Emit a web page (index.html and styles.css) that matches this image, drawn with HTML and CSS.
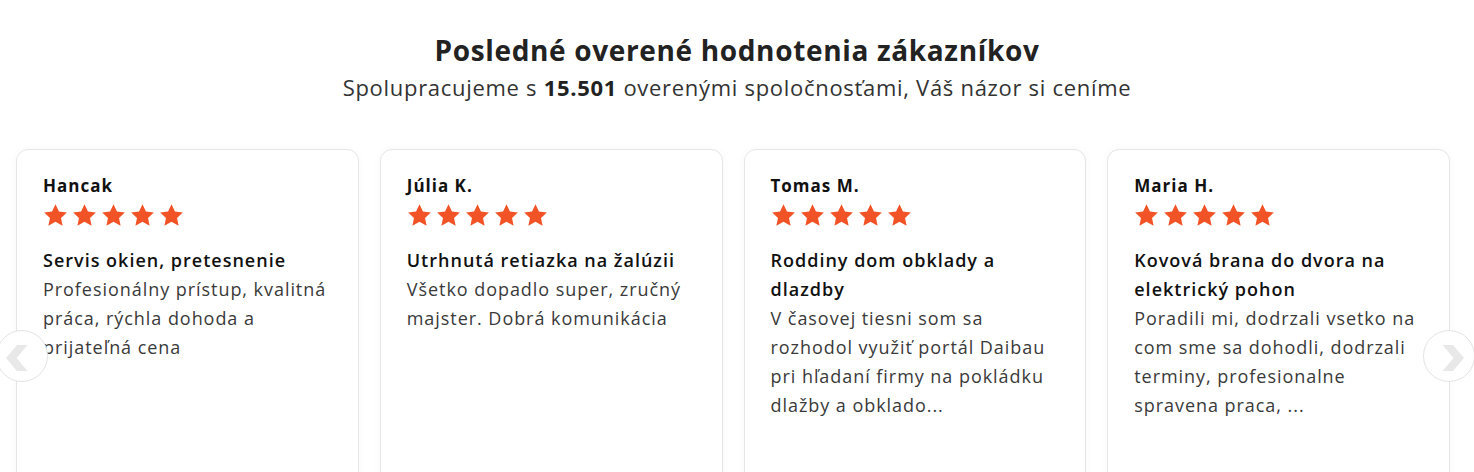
FILE: index.html
```html
<!DOCTYPE html>
<html lang="sk">
<head>
<meta charset="utf-8">
<title>Hodnotenia</title>
<link rel="stylesheet" href="styles.css">
</head>
<body>
<section class="reviews">
  <header class="reviews-head">
    <h2 class="reviews-title">Posledné overené hodnotenia zákazníkov</h2>
    <p class="reviews-sub">Spolupracujeme s <strong>15.501</strong> overenými spoločnosťami, Váš názor si ceníme</p>
  </header>
  <div class="carousel">
    <div class="track">
      <article class="card">
        <div class="name">Hancak</div>
        <div class="stars">
          <svg viewBox="0 0 24 24"><path d="M12 1.2l3.3 7 7.6.9-5.6 5.2 1.5 7.5L12 18l-6.8 3.8 1.5-7.5L1.1 9.1l7.6-.9z"/></svg>
          <svg viewBox="0 0 24 24"><path d="M12 1.2l3.3 7 7.6.9-5.6 5.2 1.5 7.5L12 18l-6.8 3.8 1.5-7.5L1.1 9.1l7.6-.9z"/></svg>
          <svg viewBox="0 0 24 24"><path d="M12 1.2l3.3 7 7.6.9-5.6 5.2 1.5 7.5L12 18l-6.8 3.8 1.5-7.5L1.1 9.1l7.6-.9z"/></svg>
          <svg viewBox="0 0 24 24"><path d="M12 1.2l3.3 7 7.6.9-5.6 5.2 1.5 7.5L12 18l-6.8 3.8 1.5-7.5L1.1 9.1l7.6-.9z"/></svg>
          <svg viewBox="0 0 24 24"><path d="M12 1.2l3.3 7 7.6.9-5.6 5.2 1.5 7.5L12 18l-6.8 3.8 1.5-7.5L1.1 9.1l7.6-.9z"/></svg>
        </div>
        <h3 class="job">Servis okien, pretesnenie</h3>
        <p class="text">Profesionálny prístup, kvalitná práca, rýchla dohoda a prijateľná cena</p>
      </article>
      <article class="card">
        <div class="name">Júlia K.</div>
        <div class="stars">
          <svg viewBox="0 0 24 24"><path d="M12 1.2l3.3 7 7.6.9-5.6 5.2 1.5 7.5L12 18l-6.8 3.8 1.5-7.5L1.1 9.1l7.6-.9z"/></svg>
          <svg viewBox="0 0 24 24"><path d="M12 1.2l3.3 7 7.6.9-5.6 5.2 1.5 7.5L12 18l-6.8 3.8 1.5-7.5L1.1 9.1l7.6-.9z"/></svg>
          <svg viewBox="0 0 24 24"><path d="M12 1.2l3.3 7 7.6.9-5.6 5.2 1.5 7.5L12 18l-6.8 3.8 1.5-7.5L1.1 9.1l7.6-.9z"/></svg>
          <svg viewBox="0 0 24 24"><path d="M12 1.2l3.3 7 7.6.9-5.6 5.2 1.5 7.5L12 18l-6.8 3.8 1.5-7.5L1.1 9.1l7.6-.9z"/></svg>
          <svg viewBox="0 0 24 24"><path d="M12 1.2l3.3 7 7.6.9-5.6 5.2 1.5 7.5L12 18l-6.8 3.8 1.5-7.5L1.1 9.1l7.6-.9z"/></svg>
        </div>
        <h3 class="job">Utrhnutá retiazka na žalúzii</h3>
        <p class="text">Všetko dopadlo super, zručný majster. Dobrá komunikácia</p>
      </article>
      <article class="card">
        <div class="name">Tomas M.</div>
        <div class="stars">
          <svg viewBox="0 0 24 24"><path d="M12 1.2l3.3 7 7.6.9-5.6 5.2 1.5 7.5L12 18l-6.8 3.8 1.5-7.5L1.1 9.1l7.6-.9z"/></svg>
          <svg viewBox="0 0 24 24"><path d="M12 1.2l3.3 7 7.6.9-5.6 5.2 1.5 7.5L12 18l-6.8 3.8 1.5-7.5L1.1 9.1l7.6-.9z"/></svg>
          <svg viewBox="0 0 24 24"><path d="M12 1.2l3.3 7 7.6.9-5.6 5.2 1.5 7.5L12 18l-6.8 3.8 1.5-7.5L1.1 9.1l7.6-.9z"/></svg>
          <svg viewBox="0 0 24 24"><path d="M12 1.2l3.3 7 7.6.9-5.6 5.2 1.5 7.5L12 18l-6.8 3.8 1.5-7.5L1.1 9.1l7.6-.9z"/></svg>
          <svg viewBox="0 0 24 24"><path d="M12 1.2l3.3 7 7.6.9-5.6 5.2 1.5 7.5L12 18l-6.8 3.8 1.5-7.5L1.1 9.1l7.6-.9z"/></svg>
        </div>
        <h3 class="job">Roddiny dom obklady a dlazdby</h3>
        <p class="text">V časovej tiesni som sa rozhodol využiť portál Daibau pri hľadaní firmy na pokládku dlažby a obklado...</p>
      </article>
      <article class="card">
        <div class="name">Maria H.</div>
        <div class="stars">
          <svg viewBox="0 0 24 24"><path d="M12 1.2l3.3 7 7.6.9-5.6 5.2 1.5 7.5L12 18l-6.8 3.8 1.5-7.5L1.1 9.1l7.6-.9z"/></svg>
          <svg viewBox="0 0 24 24"><path d="M12 1.2l3.3 7 7.6.9-5.6 5.2 1.5 7.5L12 18l-6.8 3.8 1.5-7.5L1.1 9.1l7.6-.9z"/></svg>
          <svg viewBox="0 0 24 24"><path d="M12 1.2l3.3 7 7.6.9-5.6 5.2 1.5 7.5L12 18l-6.8 3.8 1.5-7.5L1.1 9.1l7.6-.9z"/></svg>
          <svg viewBox="0 0 24 24"><path d="M12 1.2l3.3 7 7.6.9-5.6 5.2 1.5 7.5L12 18l-6.8 3.8 1.5-7.5L1.1 9.1l7.6-.9z"/></svg>
          <svg viewBox="0 0 24 24"><path d="M12 1.2l3.3 7 7.6.9-5.6 5.2 1.5 7.5L12 18l-6.8 3.8 1.5-7.5L1.1 9.1l7.6-.9z"/></svg>
        </div>
        <h3 class="job">Kovová brana do dvora na elektrický pohon</h3>
        <p class="text">Poradili mi, dodrzali vsetko na com sme sa dohodli, dodrzali terminy, profesionalne spravena praca, ...</p>
      </article>
    </div>
    <button class="arrow arrow-prev" aria-label="Predchádzajúce">
      <svg viewBox="0 0 23 26"><path d="M12 0H22.5L11.5 13L22.5 26H12L1 13Z"/></svg>
    </button>
    <button class="arrow arrow-next" aria-label="Ďalšie">
      <svg viewBox="0 0 23 26"><path d="M11 0H0.5L11.5 13L0.5 26H11L22 13Z"/></svg>
    </button>
  </div>
</section>
</body>
</html>
```

FILE: styles.css
```css
* { box-sizing: border-box; }
html, body { margin: 0; padding: 0; background: #fff; }
body {
  font-family: "Open Sans", "DejaVu Sans", sans-serif;
  color: #333;
  overflow: hidden;
  height: 472px;
}
.reviews { padding-top: 32px; }
.reviews-head { text-align: center; }
.reviews-title {
  margin: 0;
  font-size: 28px;
  line-height: 36px;
  font-weight: 700;
  letter-spacing: 0.65px;
  color: #222;
}
.reviews-sub {
  margin: 4px 0 0;
  font-size: 22px;
  line-height: 30px;
  letter-spacing: 0.7px;
  color: #333;
}
.reviews-sub strong { font-weight: 700; color: #222; }
.carousel {
  position: relative;
  margin-top: 47px;
}
.track {
  display: grid;
  grid-template-columns: repeat(4, 1fr);
  gap: 21px;
  width: 1434px;
  margin-left: 16px;
}
.card {
  background: #fff;
  border: 1px solid #e6e6e6;
  border-radius: 12px;
  box-shadow: 0 0 10px rgba(0,0,0,0.03);
  padding: 24px 18px 0 26px;
  min-height: 340px;
}
.name {
  font-size: 17px;
  line-height: 24px;
  font-weight: 700;
  letter-spacing: 1px;
  color: #111;
}
.stars {
  display: flex;
  gap: 4px;
  margin-top: 5px;
  height: 25px;
}
.stars svg { width: 25px; height: 25px; fill: #f15326; }
.job {
  margin: 18px 0 0;
  font-size: 18px;
  line-height: 29px;
  font-weight: 600;
  letter-spacing: 1px;
  color: #111;
}
.text {
  margin: 0;
  font-size: 18px;
  line-height: 29px;
  letter-spacing: 0.95px;
  color: #3a3a3a;
}
.arrow {
  position: absolute;
  top: 181px;
  width: 52px;
  height: 52px;
  border-radius: 50%;
  border: 1px solid #e4e4e4;
  background: #fff;
  padding: 0;
  display: flex;
  align-items: center;
  justify-content: center;
}
.arrow svg {
  display: block;
  flex-shrink: 0;
  width: 23px;
  height: 26px;
  fill: #e8e8e8;
  margin-top: 3px;
}
.arrow-prev { left: -4px; }
.arrow-prev svg { margin-right: 12px; }
.arrow-next { left: 1423px; }
.arrow-next svg { margin-left: 9px; }
```
